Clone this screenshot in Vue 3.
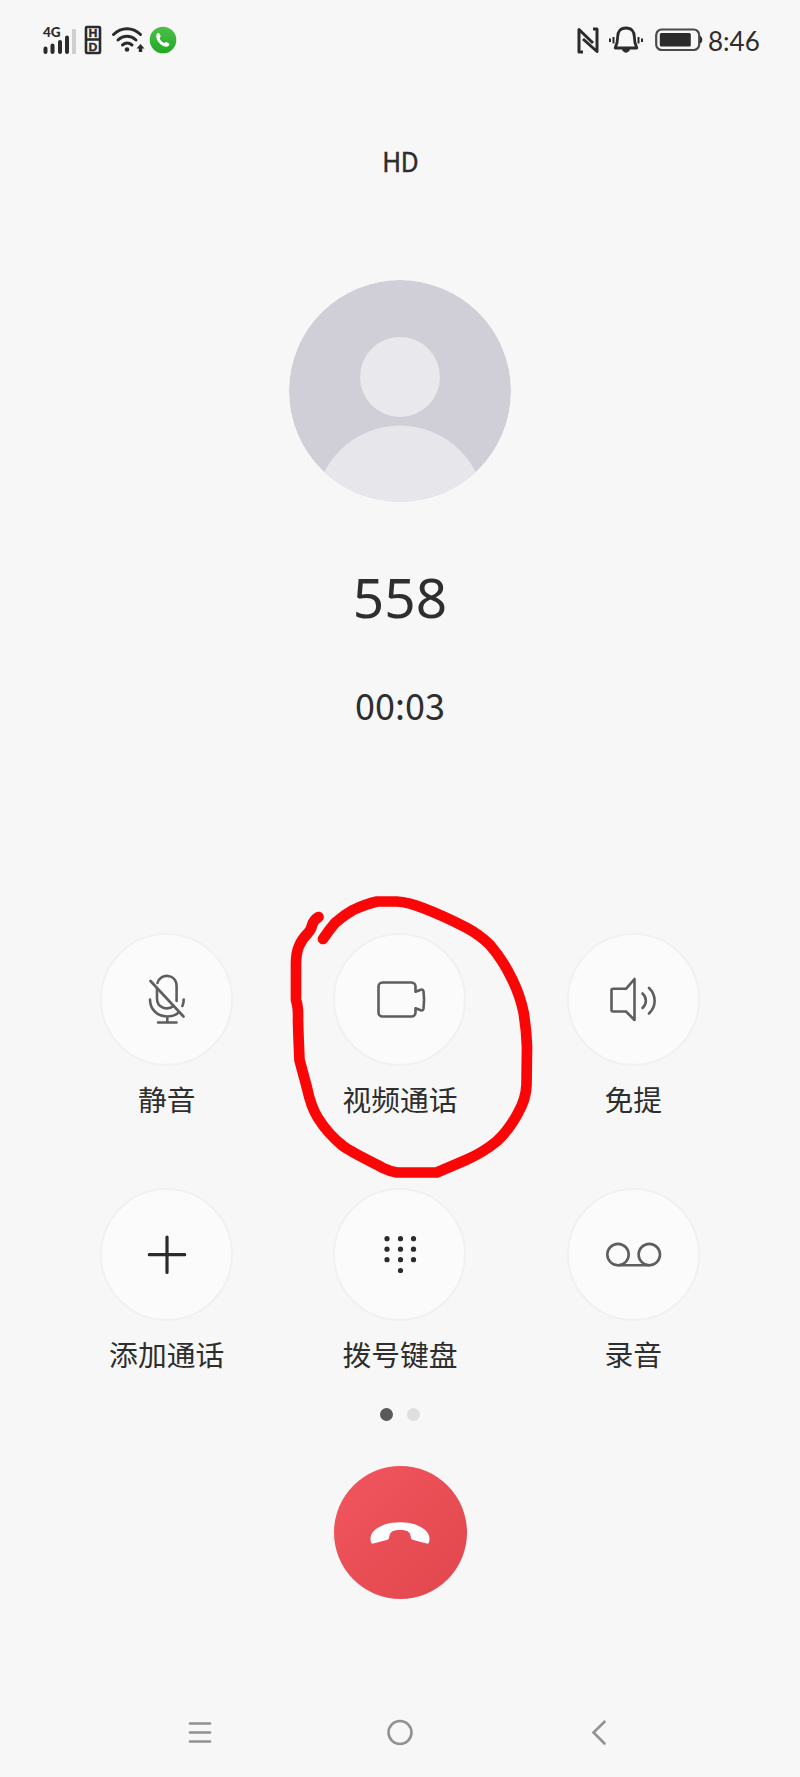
<template>
  <main class="call-screen">

    <!-- STATUS BAR -->
    <header class="status-bar">
      <div class="status-left">
        <svg class="icon-signal" viewBox="0 0 36 30">
          <text x="1" y="11.500" class="net-text">4G</text>
          <path d="M3.500 23.500v3.500M10.500 20.500v6.500M18 17v10M25 12.500v14.500" class="bar" />
          <path d="M32 4v25" class="bar off" />
        </svg>
        <svg class="icon-hd" viewBox="0 0 18 30">
          <rect x="2" y="2" width="14" height="26" rx="1" />
          <path d="M2 14.500h14" />
          <text x="9" y="12">H</text>
          <text x="9" y="25.700">D</text>
        </svg>
        <svg class="icon-wifi" viewBox="0 0 34 28">
          <path d="M2.500 8.500C10.500 .8 21.500 .8 29.500 8.500M7 14c5.500-5 12.500-5 18 0M11.500 19c3-2.500 6.500-2.500 9.500 0" />
          <circle cx="16" cy="23.500" r="2.300" />
          <path d="M29.500 18l4 4.500h-2.300V26h-3.400v-3.500h-2.300z" class="arrow" />
        </svg>
        <svg class="icon-phone" viewBox="0 0 28 28">
          <defs>
            <linearGradient id="phoneFill" x1="0" y1="0" x2="0" y2="1">
              <stop offset="0" stop-color="#4cc04a" />
              <stop offset="1" stop-color="#22a822" />
            </linearGradient>
          </defs>
          <circle cx="14" cy="14" r="13.300" fill="url(#phoneFill)" />
          <path d="M8 7.500c1.500-1 2-.8 2.800.7l.8 1.800c.4 1-.8 1.500-1 2.200.6 2 2.500 4 4.600 4.800.8-.1 1.400-1.300 2.300-1l2.200 1.300c1 .7 1 1.400.1 2.400-2.200 2.100-5.700.8-8.300-1.500C8.500 15.500 6 11 8 7.500z" />
        </svg>
      </div>
      <div class="status-right">
        <svg class="icon-nfc" viewBox="0 0 24 28">
          <path d="M6 26H2V3.500L16 17M16 3h4V25.500L6 13" />
        </svg>
        <svg class="icon-bell" viewBox="0 0 36 30">
          <path d="M18 3c-5.500 0-8.300 3.500-8.300 8.500 0 5-.7 8-2.500 11.500h21.600c-1.800-3.500-2.500-6.500-2.500-11.500C26.300 6.500 23.500 3 18 3z" />
          <path d="M14.500 24.500c.7 3.500 6.300 3.500 7 0z" class="solid" />
          <path d="M5.500 12v6.500M30.500 12v6.500M2 13.500v3.500M34 13.500v3.500" class="wave" />
        </svg>
        <svg class="icon-battery" viewBox="0 0 48 24">
          <rect x="1.200" y="1.500" width="43" height="20.500" rx="5.500" />
          <rect x="4.800" y="5" width="31" height="13.500" rx="1.500" class="level" />
          <path d="M45 8c3 .8 3 6.700 0 7.500z" class="level" />
        </svg>
        <span class="clock">8:46</span>
      </div>
    </header>

    <!-- CALLER -->
    <section class="caller">
      <p class="quality">HD</p>
      <svg class="avatar" viewBox="0 0 222 222">
        <defs>
          <clipPath id="avatarClip"><circle cx="111" cy="111" r="111" /></clipPath>
        </defs>
        <g clip-path="url(#avatarClip)">
          <circle cx="111" cy="111" r="111" fill="#d0cfd7" />
          <circle cx="111" cy="97" r="40" fill="#e9e8ed" />
          <circle cx="111" cy="230.500" r="85" fill="#e7e6eb" />
        </g>
      </svg>
      <h1 class="number">558</h1>
      <p class="timer">00:03</p>
    </section>

    <!-- ACTIONS -->
    <section class="actions">
      <div v-for="item in actions" :key="item.name" class="action">
        <button class="action-btn">
          <svg viewBox="0 0 60 60" :class="{ dark: item.dark }">
            <path v-for="(d, i) in item.paths" :key="i" :d="d" />
            <circle
              v-for="(c, i) in item.circles"
              :key="'c' + i"
              :cx="c[0]"
              :cy="c[1]"
              :r="c[2]"
              :class="{ dot: item.dots }"
            />
          </svg>
        </button>
        <span class="action-label">{{ item.label }}</span>

        <!-- hand drawn mark around the button -->
        <svg v-if="item.marked" class="marker" viewBox="280 880 260 310">
          <path
            d="M318.500 917Q314 920 312.500 924Q311 930 308 933Q302 939 299 946Q296 953 296 964V1000Q298.500 1007 298 1020Q298.500 1040 299.500 1060L307 1088Q311 1107 318 1118Q328 1134 343 1146C351 1152 370 1161 383 1168Q389 1171 397 1172.500H436.700L466 1160Q484 1152 497 1141Q509 1130 518 1113Q526 1099 526.500 1085L527 1047Q526.500 1030 523.500 1012Q520 995 512 979Q503 960 490 945Q480 935 467 928Q444 916 423 908Q408 902 397 901.500H377Q366 904 353 910Q344 915 335 923Q329 930 323 939"
          />
        </svg>
      </div>
    </section>

    <!-- PAGER -->
    <div class="pager">
      <span class="page active"></span>
      <span class="page"></span>
    </div>

    <button class="hangup">
      <svg viewBox="0 0 60 24">
        <path d="M.7 20c-1.500-8.500 5.500-13.500 14-16.600 8.500-2.900 22.100-2.900 30.600 0 8.500 3.100 15.500 8.100 14 16.600-.2 2.500-1.500 3-3.600 2.300l-13.200-3.600c-1.500-.5-1.500-1.700-1.800-3.200-.7-4.500-3-6.500-10.700-6.500s-9.700 2-10.700 6.500c-.4 1.500-.3 2.700-1.800 3.200L4.300 22.300C2.200 23 .9 22.500.7 20z" />
      </svg>
    </button>

    <!-- NAVIGATION -->
    <nav class="nav-bar">
      <svg viewBox="0 0 30 30"><path d="M5 6.500h20M5 15.500h20M5 24.500h20" /></svg>
      <svg viewBox="0 0 30 30"><circle cx="15" cy="15.500" r="11.500" /></svg>
      <svg viewBox="0 0 30 30"><path d="M19.500 4.700L8.500 15.500l11 11" /></svg>
    </nav>
  </main>
</template>

<script setup>
const actions = [
  {
    name: 'mute',
    label: '静音',
    paths: [
      'M20.500 13C23 3 39.600 3 39.600 16.500V31M20 18v10.500c0 10 11 12 16.500 7.500',
      'M13.500 11l33 35.500',
      'M13 29.500c0 10 7.500 17 17.300 17 4.200 0 8-1.300 10.700-3.500M46.700 29.500c0 2.500-.4 4.500-1.300 6.500M30.300 46.500v6M21 52.500h18.500'
    ]
  },
  {
    name: 'video',
    label: '视频通话',
    marked: true,
    paths: [
      'M12.500 12.500h29a4 4 0 0 1 4 4v5.200l5.300-2q2.300-.6 2.700 1.800 1.200 8.500 0 17-.4 2.400-2.700 1.800l-5.300-2v4.200a4 4 0 0 1-4 4h-29a4 4 0 0 1-4-4v-26a4 4 0 0 1 4-4z'
    ]
  },
  {
    name: 'speaker',
    label: '免提',
    paths: [
      'M10 18.800h13L31.500 9v41L23 41.500H10q-1.500 0-1.500-1.500V20.300q0-1.500 1.500-1.500z',
      'M39.500 23.500c4.500 4 4.500 10.500 0 14.500M46 18c7.500 7 7.500 18.500 0 25.500'
    ]
  },
  {
    name: 'add',
    label: '添加通话',
    dark: true,
    paths: ['M12.300 29.700h35.400M30 12v35.400']
  },
  {
    name: 'keypad',
    label: '拨号键盘',
    dots: true,
    paths: [],
    circles: [
      [17, 13.7, 2.6], [30.5, 13.7, 2.6], [43.5, 13.7, 2.6],
      [17, 24.2, 2.6], [30.5, 24.2, 2.6], [43.5, 24.2, 2.6],
      [17, 34.7, 2.6], [30.5, 34.7, 2.6], [43.5, 34.7, 2.6],
      [30.5, 45.5, 2.6]
    ]
  },
  {
    name: 'record',
    label: '录音',
    paths: ['M15 40.300h31.300'],
    circles: [[15, 29.6, 10.7], [46.3, 29.6, 10.7]]
  }
]
</script>

<style>
body {
  background: #f7f7f7;
}
</style>

<style scoped>
.call-screen {
  display: flex;
  flex-direction: column;
  align-items: center;
  box-sizing: border-box;
  width: 800px;
  height: 1777px;
  overflow: hidden;
  background: #f7f7f7;
  color: #2e2e2e;
  font-family: Lato, "Noto Sans CJK SC", sans-serif;
}

svg {
  display: block;
  flex: none;
  fill: none;
}

button {
  display: flex;
  align-items: center;
  justify-content: center;
  padding: 0;
  border: 0;
}

p,
h1 {
  margin: 0;
}

/* STATUS BAR */
.status-bar {
  display: flex;
  justify-content: space-between;
  box-sizing: border-box;
  width: 100%;
  height: 80px;
  padding: 0 40px 0 42px;
}

.status-left,
.status-right {
  display: flex;
  align-items: center;
  height: 80px;
}

.icon-signal {
  width: 36px;
  height: 30px;
}

.net-text {
  fill: #2b2b2b;
  font: 900 13.5px Lato, sans-serif;
}

.bar {
  stroke: #2b2b2b;
  stroke-width: 4;
  stroke-linecap: round;
}

.bar.off {
  stroke: #cfcfcf;
  stroke-linecap: butt;
}

.icon-hd {
  width: 18px;
  height: 30px;
  margin-left: 6px;
  stroke: #2b2b2b;
  stroke-width: 2.6;
}

.icon-hd text {
  fill: #2b2b2b;
  stroke: #2b2b2b;
  stroke-width: 0.4;
  font: 900 11.5px Lato, sans-serif;
  text-anchor: middle;
}

.icon-wifi {
  width: 34px;
  height: 28px;
  margin-left: 9px;
  stroke: #2b2b2b;
  stroke-width: 3;
  stroke-linecap: round;
}

.icon-wifi circle,
.icon-wifi .arrow {
  fill: #2b2b2b;
  stroke: none;
}

.icon-phone {
  width: 28px;
  height: 28px;
  margin-left: 4px;
}

.icon-phone path {
  fill: #fff;
}

.icon-nfc {
  width: 24px;
  height: 28px;
  stroke: #2b2b2b;
  stroke-width: 3;
  stroke-linejoin: round;
}

.icon-bell {
  width: 36px;
  height: 30px;
  margin-left: 7px;
  stroke: #2b2b2b;
  stroke-width: 2.8;
  stroke-linejoin: round;
}

.icon-bell .solid {
  fill: #2b2b2b;
  stroke-width: 1;
}

.icon-bell .wave {
  stroke-width: 2;
}

.icon-battery {
  width: 48px;
  height: 24px;
  margin-left: 11px;
  stroke: #4a4a4a;
  stroke-width: 2.2;
}

.icon-battery .level {
  fill: #2b2b2b;
  stroke: none;
}

.clock {
  width: 52px;
  padding-top: 2px;
  margin-left: 5px;
  font-size: 26px;
  line-height: 32px;
  white-space: nowrap;
}

/* CALLER */
.caller {
  display: flex;
  flex-direction: column;
  align-items: center;
  height: 853px;
}

.quality {
  margin-top: 64px;
  font-family: "Noto Sans CJK SC", sans-serif;
  font-size: 26.5px;
  line-height: 34px;
  letter-spacing: -0.8px;
  -webkit-text-stroke: 0.3px #2e2e2e;
}

.avatar {
  width: 222px;
  height: 222px;
  margin-top: 102px;
}

.number {
  margin-top: 62px;
  font-family: "Noto Sans", sans-serif;
  font-size: 55px;
  font-weight: 400;
  line-height: 66px;
}

.timer {
  margin-top: 52px;
  font-family: "Noto Sans CJK SC", sans-serif;
  font-size: 36px;
  line-height: 44px;
}

/* ACTIONS */
.actions {
  display: grid;
  grid-template-columns: repeat(3, 233.3px);
  grid-auto-rows: 255px;
}

.action {
  position: relative;
  display: flex;
  flex-direction: column;
  align-items: center;
}

.action-btn {
  box-sizing: border-box;
  width: 133px;
  height: 133px;
  border: 2px solid #f1f1f1;
  border-radius: 50%;
  background: #fbfbfb;
}

.action-btn svg {
  width: 60px;
  height: 60px;
  stroke: #5e5e5e;
  stroke-width: 2.6;
  stroke-linecap: round;
  stroke-linejoin: round;
}

.action-btn svg.dark {
  stroke: #2b2b2b;
  stroke-width: 3.2;
}

.action-btn .dot {
  fill: #2b2b2b;
  stroke: none;
}

.action-label {
  margin-top: 13px;
  font-family: "Noto Sans CJK SC", sans-serif;
  font-size: 28.8px;
  line-height: 40px;
}

.marker {
  position: absolute;
  top: -53px;
  left: -3.3px;
  z-index: 1;
  width: 260px;
  height: 310px;
  stroke: #fb0606;
  stroke-width: 10.7;
  stroke-linecap: round;
  stroke-linejoin: round;
  pointer-events: none;
}

/* PAGER */
.pager {
  display: flex;
  gap: 14px;
  margin-top: -35px;
}

.page {
  width: 13px;
  height: 13px;
  border-radius: 50%;
  background: #dfdfdf;
}

.page.active {
  background: #595959;
}

.hangup {
  flex: none;
  width: 133px;
  height: 133px;
  margin-top: 45px;
  border-radius: 50%;
  background: linear-gradient(135deg, #f2555f, #e0474c);
}

.hangup svg {
  width: 60px;
  height: 24px;
  fill: #fff;
}

/* NAVIGATION */
.nav-bar {
  display: flex;
  justify-content: space-between;
  width: 430px;
  margin-top: 118px;
}

.nav-bar svg {
  width: 30px;
  height: 30px;
  stroke: #929292;
  stroke-width: 2.6;
  stroke-linecap: round;
}
</style>
